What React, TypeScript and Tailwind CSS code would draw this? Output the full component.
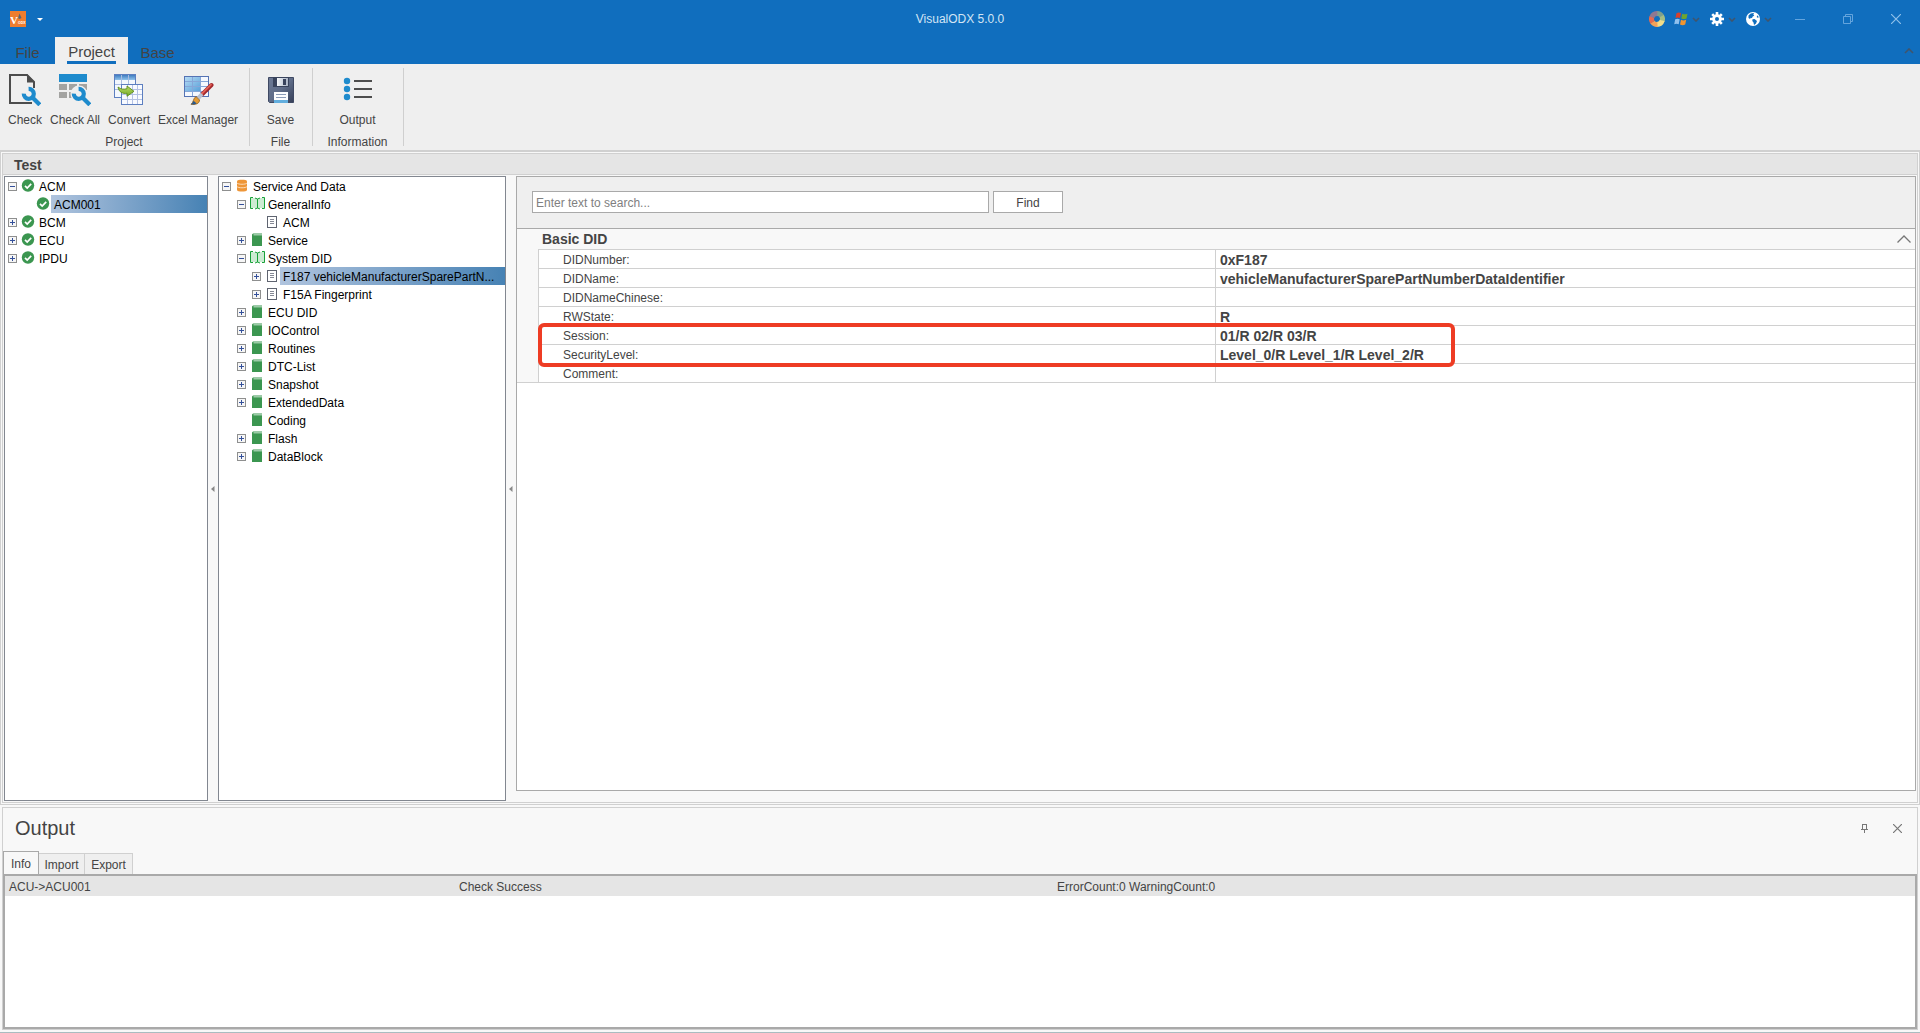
import React from 'react';

type TreeIcon = 'ok' | 'db' | 'open' | 'book' | 'doc';

interface TreeRow {
  label: string;
  level: number;
  icon: TreeIcon;
  expander?: '+' | '-';
  selected?: boolean;
}

const ECU_ROWS: TreeRow[] = [
  { label: 'ACM', level: 0, icon: 'ok', expander: '-' },
  { label: 'ACM001', level: 1, icon: 'ok', selected: true },
  { label: 'BCM', level: 0, icon: 'ok', expander: '+' },
  { label: 'ECU', level: 0, icon: 'ok', expander: '+' },
  { label: 'IPDU', level: 0, icon: 'ok', expander: '+' },
];

const SERVICE_ROWS: TreeRow[] = [
  { label: 'Service And Data', level: 0, icon: 'db', expander: '-' },
  { label: 'GeneralInfo', level: 1, icon: 'open', expander: '-' },
  { label: 'ACM', level: 2, icon: 'doc' },
  { label: 'Service', level: 1, icon: 'book', expander: '+' },
  { label: 'System DID', level: 1, icon: 'open', expander: '-' },
  { label: 'F187 vehicleManufacturerSparePartN...', level: 2, icon: 'doc', expander: '+', selected: true },
  { label: 'F15A Fingerprint', level: 2, icon: 'doc', expander: '+' },
  { label: 'ECU DID', level: 1, icon: 'book', expander: '+' },
  { label: 'IOControl', level: 1, icon: 'book', expander: '+' },
  { label: 'Routines', level: 1, icon: 'book', expander: '+' },
  { label: 'DTC-List', level: 1, icon: 'book', expander: '+' },
  { label: 'Snapshot', level: 1, icon: 'book', expander: '+' },
  { label: 'ExtendedData', level: 1, icon: 'book', expander: '+' },
  { label: 'Coding', level: 1, icon: 'book' },
  { label: 'Flash', level: 1, icon: 'book', expander: '+' },
  { label: 'DataBlock', level: 1, icon: 'book', expander: '+' },
];

const PROPERTIES = [
  { name: 'DIDNumber:', value: '0xF187' },
  { name: 'DIDName:', value: 'vehicleManufacturerSparePartNumberDataIdentifier' },
  { name: 'DIDNameChinese:', value: '' },
  { name: 'RWState:', value: 'R' },
  { name: 'Session:', value: '01/R 02/R 03/R' },
  { name: 'SecurityLevel:', value: 'Level_0/R Level_1/R Level_2/R' },
  { name: 'Comment:', value: '' },
];

const INDENT = ['pl-[3px]', 'pl-[18px]', 'pl-[33px]'];

/* ---------- tree ---------- */

const TreeGlyph = ({ icon }: { icon: TreeIcon }) => {
  switch (icon) {
    case 'ok':
      return (
        <svg width="16" height="16" viewBox="0 0 16 16">
          <circle cx="8" cy="7.5" r="6.2" fill="#3b9650" />
          <path d="M5 7.800l2.200 2.200 4-4.200" fill="none" stroke="#fff" strokeWidth="1.700" />
        </svg>
      );
    case 'db':
      return (
        <svg width="16" height="16" viewBox="0 0 16 16">
          <path d="M3 3.200C3 1.300 13 1.300 13 3.200V12c0 2-10 2-10 0z" fill="#ee9638" />
          <path d="M3 5c1 1.700 9 1.700 10 0M3 8.500c1 1.700 9 1.700 10 0" fill="none" stroke="#fde3c8" strokeWidth="0.9" />
        </svg>
      );
    case 'open':
      return (
        <svg width="16" height="16" viewBox="0 0 16 16">
          <path d="M2 2h5l1.500 1 1-1H15v10H9.500l-1 1-1-1H2z" fill="#ccebd2" />
          <path d="M4 1.500H1.500v11H4M13 1.500h2.500v11H13M6 2l2.500 1L11 2M6 13l2.500-1 2.500 1M8.500 3v9" fill="none" stroke="#17a238" />
        </svg>
      );
    case 'book':
      return (
        <svg width="16" height="16" viewBox="0 0 16 16">
          <path d="M3 2.500L4 1.500h9v1H4.500v.8H13V14H3z" fill="#3b9650" />
        </svg>
      );
    default:
      return (
        <svg width="16" height="16" viewBox="0 0 16 16">
          <rect x="3.500" y="2.500" width="9" height="11" fill="#fff" stroke="#5f6470" />
          <path d="M6 5.500h4M6 7.500h4M6 9.500h4" stroke="#858995" />
        </svg>
      );
  }
};

const Expander = ({ kind }: { kind: '+' | '-' }) => (
  <button type="button" aria-label={kind === '+' ? 'Expand' : 'Collapse'} className="block">
    <svg width="9" height="9" viewBox="0 0 9 9">
      <rect x="0.5" y="0.5" width="8" height="8" fill="#f6f6f6" stroke="#8e8f8f" />
      <path d={kind === '+' ? 'M2 4.5h5M4.5 2v5' : 'M2 4.5h5'} stroke="#34509a" />
    </svg>
  </button>
);

const Tree = ({ rows, label }: { rows: TreeRow[]; label: string }) => (
  <ul role="tree" aria-label={label} className="text-black">
    {rows.map((row, index) => (
      <li
        key={index}
        role="treeitem"
        aria-level={row.level + 1}
        aria-selected={!!row.selected}
        className={`flex h-[18px] items-center ${INDENT[row.level]}`}
      >
        <span className="mr-[3px] w-[9px] shrink-0">{row.expander && <Expander kind={row.expander} />}</span>
        <span className="shrink-0">
          <TreeGlyph icon={row.icon} />
        </span>
        <span
          className={`h-[18px] min-w-0 flex-1 truncate pl-[3px] leading-[20px] ${
            row.selected ? 'bg-linear-to-r from-[#b0c4de] to-[#4682b4]' : ''
          }`}
        >
          {row.label}
        </span>
      </li>
    ))}
  </ul>
);

const Splitter = () => (
  <div className="flex w-[10px] shrink-0 items-center justify-center">
    <svg width="4" height="6" viewBox="0 0 4 6">
      <path d="M3.500 0v6L0 3z" fill="#888" />
    </svg>
  </div>
);

/* ---------- ribbon icons ---------- */

const Wrench = () => (
  <>
    <path d="M19.600 14.800a5 5 0 1 1-4.800 4.800" fill="none" stroke="#1e8bcd" strokeWidth="4.200" />
    <path d="M23 23l7.800 7.800" stroke="#1e8bcd" strokeWidth="4.200" />
  </>
);

const CheckIcon = () => (
  <svg width="32" height="32" viewBox="0 0 32 32">
    <path d="M25 15V8l-7-7H1v28h22" fill="none" stroke="#4d4d4d" strokeWidth="2" />
    <path d="M18 0l8 8.500h-8z" fill="#4d4d4d" />
    <path d="M14 12h14v13H14z" fill="#efefef" />
    <path d="M25 14V8" stroke="#4d4d4d" strokeWidth="2" />
    <Wrench />
  </svg>
);

const CheckAllIcon = () => (
  <svg width="32" height="32" viewBox="0 0 32 32">
    <path d="M0 0h28v8H0z" fill="#1e8bcd" />
    <path d="M0 10h8v6H0zM10 10h8v6h-8zM20 10h8v6h-8zM0 18h8v6H0zM10 18h8v6h-8z" fill="#a3a3a1" />
    <circle cx="20" cy="20" r="8.500" fill="#efefef" />
    <Wrench />
  </svg>
);

const ConvertIcon = () => (
  <svg width="32" height="32" viewBox="0 0 32 32">
    <defs>
      <linearGradient id="convHead" x1="0" y1="0" x2="0" y2="1">
        <stop offset="0" stopColor="#3f7cc0" />
        <stop offset="1" stopColor="#8fc3ec" />
      </linearGradient>
      <linearGradient id="convArrow" x1="0" y1="0" x2="0" y2="1">
        <stop offset="0" stopColor="#b9dc63" />
        <stop offset="1" stopColor="#74a928" />
      </linearGradient>
    </defs>
    <rect x="1.500" y="0.500" width="21" height="23" fill="#f3f7fd" stroke="#5d7fc0" />
    <rect x="2" y="1" width="20" height="5" fill="url(#convHead)" />
    <path d="M2 10.500h20M2 15.500h20M8.500 1v22M15.500 1v22" stroke="#a9bbe0" />
    <rect x="8.500" y="10.500" width="21" height="20" fill="#f8faff" stroke="#5d7fc0" />
    <path d="M9 15.500h20M9 20.500h20M9 25.500h20M14.500 11v19M19.500 11v19M24.500 11v19" stroke="#b3c1e4" />
    <path d="M5 13c3 2.500 6 2.500 9 1.700V12l7 5.300-7 5v-3C10 20 6 18.500 5 13z" fill="url(#convArrow)" stroke="#5b8a1c" strokeWidth="0.9" />
  </svg>
);

const ExcelIcon = () => (
  <svg width="32" height="32" viewBox="0 0 32 32">
    <defs>
      <linearGradient id="xlCells" x1="0" y1="0" x2="1" y2="1">
        <stop offset="0" stopColor="#b5daf4" />
        <stop offset="1" stopColor="#579fd8" />
      </linearGradient>
    </defs>
    <rect x="2.500" y="2.500" width="24" height="20" fill="#f5f8fe" stroke="#5573b4" />
    <rect x="3" y="3" width="16" height="14" fill="url(#xlCells)" />
    <path d="M3 7.500h23M3 12.500h23M3 17.500h23M10.500 3v19M18.500 3v19" stroke="#86a7d8" />
    <path d="M29.500 11L20 20.500" stroke="#a3272b" strokeWidth="4" strokeLinecap="round" />
    <path d="M29 10.700L20 19.700" stroke="#e36055" strokeWidth="1.800" strokeLinecap="round" />
    <path d="M20 20l-4 4.300" stroke="#b9c0cf" strokeWidth="4" />
    <path d="M14 22.500l3.500 3.500c0 4-4.500 4.800-8.500 4.300 2.500-1.500 2-5.800 5-7.800z" fill="#e39b35" stroke="#8a5a1b" strokeWidth="0.800" />
    <path d="M9 30.300c1.500-.8 2-2.300 2.600-3.500l3 2.800c-1.600.8-3.600 1-5.600.7z" fill="#27598f" />
  </svg>
);

const SaveIcon = () => (
  <svg width="32" height="32" viewBox="0 0 32 32">
    <defs>
      <linearGradient id="disk" x1="0" y1="0" x2="1" y2="1">
        <stop offset="0" stopColor="#6d7a96" />
        <stop offset="0.5" stopColor="#5f6c88" />
        <stop offset="1" stopColor="#353e57" />
      </linearGradient>
      <linearGradient id="shutter" x1="0" y1="0" x2="1" y2="0">
        <stop offset="0" stopColor="#f6f8fb" />
        <stop offset="1" stopColor="#aab4c6" />
      </linearGradient>
    </defs>
    <path d="M3.500 3.500h25v25h-24l-1-1z" fill="url(#disk)" stroke="#3f4963" />
    <rect x="8" y="3" width="16" height="10" fill="#39435c" />
    <rect x="12" y="4" width="11" height="8" fill="url(#shutter)" />
    <rect x="18" y="5" width="3" height="6" fill="#39435c" />
    <rect x="9" y="18" width="14" height="11" fill="#fdfdfe" />
    <rect x="9" y="26" width="14" height="3" fill="#62aede" />
    <path d="M11 20.500h10M11 23.500h10" stroke="#8c9cb8" />
  </svg>
);

const OutputIcon = () => (
  <svg width="32" height="32" viewBox="0 0 32 32">
    {[7, 15, 23].map(y => (
      <g key={y}>
        <circle cx="5" cy={y} r="3.200" fill="#1e8bcd" />
        <path d={`M12 ${y}h18`} stroke="#4d4d4d" strokeWidth="2" />
      </g>
    ))}
  </svg>
);

const RibbonButton = ({ label, children }: { label: string; children: React.ReactNode }) => (
  <button type="button" className="flex flex-col items-center gap-[6px] whitespace-nowrap px-1 leading-4">
    {children}
    {label}
  </button>
);

const RibbonGroup = ({ caption, className, children }: { caption: string; className: string; children: React.ReactNode }) => (
  <section aria-label={caption} className={`relative flex h-full flex-col justify-between pt-[10px] pr-0.5 ${className}`}>
    <div className="flex justify-center">{children}</div>
    <div className="text-center leading-4">{caption}</div>
    <span className="absolute top-1 right-0 bottom-1 w-px bg-[#cfcfcf]" />
  </section>
);

/* ---------- title bar ---------- */

const Caret = () => (
  <svg width="8" height="5" viewBox="0 0 8 5">
    <path d="M1 1l3 3 3-3" fill="none" stroke="#41556c" strokeWidth="1.600" />
  </svg>
);

const TitleBar = () => (
  <header className="grid h-[37px] grid-cols-[1fr_auto_1fr] items-center bg-[#106ebe] pt-px text-white">
    <div className="flex items-center gap-[11px] pl-[10px]">
      <svg width="16" height="16" viewBox="0 0 16 16" aria-label="VisualODX">
        <rect width="16" height="16" fill="#ef7d2e" />
        <path d="M8 7l1.500-4.500L11.500 7l-2 1z" fill="#5d6470" />
        <text x="0" y="13" fontFamily="Liberation Serif, serif" fontSize="11" fontWeight="700" fill="#fff">V</text>
        <text x="8" y="13" fontFamily="Liberation Sans, sans-serif" fontSize="3.500" fontWeight="700" fill="#fff">ODX</text>
      </svg>
      <button type="button" aria-label="Customize toolbar">
        <svg width="6" height="3" viewBox="0 0 6 3"><path d="M0 0h6L3 3z" fill="#fff" /></svg>
      </button>
    </div>
    <h1 className="text-[#d3e5f5]">VisualODX 5.0.0</h1>
    <div className="flex items-center justify-end">
      <button type="button" aria-label="Skin color" className="mr-[9px]">
        <svg width="16" height="16" viewBox="0 0 16 16">
          <g fill="none" strokeWidth="5">
            <path d="M8 2.500A5.500 5.500 0 0 1 12.800 5.200" stroke="#7f9f8c" />
            <path d="M12.600 5a5.500 5.500 0 0 1 .5 5" stroke="#a3bd86" />
            <path d="M13.200 9.600A5.500 5.500 0 0 1 8 13.500" stroke="#f0dc8a" />
            <path d="M8.500 13.500A5.500 5.500 0 0 1 3.400 11" stroke="#f2a259" />
            <path d="M3.600 11.300A5.500 5.500 0 0 1 3 5.800" stroke="#e36a50" />
            <path d="M2.900 6.200A5.500 5.500 0 0 1 8.300 2.500" stroke="#8e7891" />
          </g>
        </svg>
      </button>
      <div className="mr-1 flex items-center gap-[10px]">
        <button type="button" aria-label="Skins" className="flex items-center gap-1">
          <svg width="14" height="14" viewBox="0 0 14 14">
            <path d="M2.500 1.200C4 .2 5.500.2 7 1L6 6C4.500 5.200 3 5.200 1.500 6z" fill="#d8402c" />
            <path d="M8.200 1.700c1.700.8 3.300.8 5.300 0l-1 4.800c-1.700.8-3.500.8-5.200 0z" fill="#6fa52d" />
            <path d="M1.200 7.300c1.500-.8 3-.8 4.500 0l-1 5c-1.500-.8-3-.8-4.500 0z" fill="#8fc0ee" />
            <path d="M7 7.800c1.700.8 3.300.8 5.200 0l-1 4.800c-1.700.8-3.500.8-5.200 0z" fill="#f0952f" />
          </svg>
          <Caret />
        </button>
        <button type="button" aria-label="Settings" className="flex items-center gap-1">
          <svg width="14" height="14" viewBox="0 0 14 14">
            <g stroke="#fff" strokeWidth="2.600">
              <path d="M7 0v14M0 7h14M2.200 2.200l9.600 9.600M11.800 2.200l-9.600 9.600" />
            </g>
            <circle cx="7" cy="7" r="4.800" fill="#fff" />
            <circle cx="7" cy="7" r="2" fill="#106ebe" />
          </svg>
          <Caret />
        </button>
        <button type="button" aria-label="Language" className="flex items-center gap-1">
          <svg width="14" height="14" viewBox="0 0 14 14">
            <circle cx="7" cy="7" r="7" fill="#fff" />
            <path d="M2.500 3.500C4 1.500 6 .8 8 1L7.300 2.600 8.300 3.600 6.500 4.800 6 6.200 4.800 5.800 4 7 2.500 6z" fill="#106ebe" />
            <path d="M6.500 7.200l2-.2 2.500 2-1 2.500L8 13 7.500 10.500 6.300 9z" fill="#106ebe" />
            <path d="M11 3.200l1.500 1.300-.2 1.500-1.500-.8z" fill="#106ebe" />
          </svg>
          <Caret />
        </button>
      </div>
      <button type="button" aria-label="Minimize" className="flex w-12 justify-center">
        <svg width="10" height="10" viewBox="0 0 10 10"><path d="M0 5.500h10" stroke="#64a4dd" /></svg>
      </button>
      <button type="button" aria-label="Restore" className="flex w-12 justify-center">
        <svg width="10" height="10" viewBox="0 0 10 10">
          <path d="M.5 2.500h7v7h-7zM2.500 2.500v-2h7v7h-2" fill="none" stroke="#64a4dd" />
        </svg>
      </button>
      <button type="button" aria-label="Close" className="flex w-12 justify-center">
        <svg width="10" height="10" viewBox="0 0 10 10"><path d="M0 0l10 10M10 0L0 10" stroke="#8fc0ea" strokeWidth="1.200" /></svg>
      </button>
    </div>
  </header>
);

const App: React.FC = () => {
  return (
    <div className="flex min-h-screen flex-col border-b border-[#a9bcc0] bg-[#f8f8f8] pb-0.5 font-['Liberation_Sans',Arial,sans-serif] text-[12px] leading-4 text-[#444444]">
      <TitleBar />

      <nav className="flex h-[27px] bg-[#106ebe] text-[15px]">
        <button type="button" className="w-[55px] pt-1">File</button>
        <button type="button" className="flex w-[73px] flex-col items-center justify-between bg-[#efefef] pt-[7px]">
          Project
          <span className="h-[3px] w-[49px] bg-[#106ebe]" />
        </button>
        <button type="button" className="w-[59px] pt-1">Base</button>
        <button type="button" aria-label="Collapse ribbon" className="mr-[6px] ml-auto">
          <svg width="10" height="6" viewBox="0 0 10 6">
            <path d="M1 5l4-4 4 4" fill="none" stroke="#41556c" strokeWidth="1.600" />
          </svg>
        </button>
      </nav>

      <div className="flex h-[86px] bg-[#efefef]">
        <RibbonGroup caption="Project" className="w-[250px]">
          <div className="flex w-full pl-1">
            <RibbonButton label="Check"><CheckIcon /></RibbonButton>
            <RibbonButton label="Check All"><CheckAllIcon /></RibbonButton>
            <RibbonButton label="Convert"><ConvertIcon /></RibbonButton>
            <RibbonButton label="Excel Manager"><ExcelIcon /></RibbonButton>
          </div>
        </RibbonGroup>
        <RibbonGroup caption="File" className="w-[63px]">
          <RibbonButton label="Save"><SaveIcon /></RibbonButton>
        </RibbonGroup>
        <RibbonGroup caption="Information" className="w-[91px]">
          <RibbonButton label="Output"><OutputIcon /></RibbonButton>
        </RibbonGroup>
      </div>

      {/* Workspace */}
      <main className="flex flex-1 flex-col border border-t-2 border-[#d0d0d0] p-px">
        <div className="flex flex-1 flex-col border border-[#d0d0d0]">
          <h2 className="h-[21px] border-b border-[#d0d0d0] bg-[#e5e5e5] pl-[11px] text-[14px] leading-[22px] font-bold">Test</h2>
          <div className="flex flex-1 p-px">
            <div className="w-[204px] shrink-0 border border-[#828790] bg-white">
              <Tree rows={ECU_ROWS} label="ECU" />
            </div>
            <Splitter />
            <div className="w-[288px] shrink-0 border border-[#828790] bg-white">
              <Tree rows={SERVICE_ROWS} label="Services" />
            </div>
            <Splitter />
            <div className="mb-[10px] min-w-0 flex-1 border border-[#a9a9a9] bg-white">
              <form className="flex h-[52px] items-start gap-1 border-b border-[#a9a9a9] bg-[#efefef] pt-[14px] pl-[15px]" onSubmit={e => e.preventDefault()}>
                <input
                  type="text"
                  aria-label="Search"
                  placeholder="Enter text to search..."
                  className="h-[22px] w-[457px] border border-[#a9a9a9] bg-white px-[3px] pt-px placeholder:text-[#808080]"
                />
                <button type="submit" className="h-[22px] w-[70px] border border-[#a9a9a9] bg-white pt-px">Find</button>
              </form>
              <div className="relative bg-[#f8f8f8]">
                <div className="flex h-[20px] items-center justify-between pr-1 pl-[25px]">
                  <h3 className="text-[14px] font-bold">Basic DID</h3>
                  <button type="button" aria-label="Collapse category">
                    <svg width="14" height="8" viewBox="0 0 14 8">
                      <path d="M.5 7.500L7 1l6.500 6.500" fill="none" stroke="#777" strokeWidth="1.300" />
                    </svg>
                  </button>
                </div>
                <div className="border-b border-[#d0d0d0] pl-[21px]">
                  <table className="w-full table-fixed border-separate border-spacing-0 bg-white">
                    <tbody>
                      {PROPERTIES.map(prop => (
                        <tr key={prop.name} className="h-[19px]">
                          <th scope="row" className="w-[677px] border-t border-l border-[#d0d0d0] p-0 pt-px pl-6 text-left font-normal">
                            {prop.name}
                          </th>
                          <td className="border-t border-l border-[#d0d0d0] p-0 pt-px pl-1 text-[14px] leading-4 font-bold">{prop.value}</td>
                        </tr>
                      ))}
                    </tbody>
                  </table>
                </div>
                {/* highlight over Session + SecurityLevel */}
                <div className="pointer-events-none absolute top-[94px] left-[21px] h-[44px] w-[917px] rounded-[6px] border-4 border-[#ee3c24]" />
              </div>
            </div>
          </div>
        </div>
      </main>

      {/* Output panel */}
      <section aria-label="Output" className="mx-0.5 mt-0.5 border border-[#d0d0d0]">
        <div className="flex h-[43px] items-center pr-[15px] pl-3">
          <h2 className="flex-1 pb-1 text-[20px] leading-6">Output</h2>
          <button type="button" aria-label="Pin" className="mr-[24px] pb-0.5">
            <svg width="9" height="9" viewBox="0 0 9 9">
              <path d="M2 .5h5M2.500 1v4M6.500 1v4M1 5.500h7M4.500 6v3" fill="none" stroke="#777" />
            </svg>
          </button>
          <button type="button" aria-label="Close panel" className="pb-0.5">
            <svg width="9" height="9" viewBox="0 0 9 9"><path d="M0 0l9 9M9 0L0 9" stroke="#777" strokeWidth="1.200" /></svg>
          </button>
        </div>
        <div role="tablist" className="flex h-[23px] items-end">
          <button type="button" role="tab" aria-selected="true" className="h-[23px] w-[36px] border border-b-0 border-[#a9a9a9] bg-[#f8f8f8] pt-px">Info</button>
          <button type="button" role="tab" aria-selected="false" className="h-[21px] w-[46px] border-t border-r border-[#d0d0d0] bg-[#efefef] pt-0.5">Import</button>
          <button type="button" role="tab" aria-selected="false" className="h-[21px] w-[48px] border-t border-r border-[#d0d0d0] bg-[#efefef] pt-0.5">Export</button>
        </div>
        <div className="min-h-[155px] border-2 border-[#a9a9a9] bg-white">
          <table className="w-full table-fixed">
            <tbody>
              <tr className="h-[20px] bg-[#e5e5e5]">
                <td className="w-[450px] p-0 pt-0.5 pl-1">ACU-&gt;ACU001</td>
                <td className="w-[598px] p-0 pt-0.5 pl-1">Check Success</td>
                <td className="p-0 pt-0.5 pl-1">ErrorCount:0 WarningCount:0</td>
              </tr>
            </tbody>
          </table>
        </div>
      </section>
    </div>
  );
};

export default App;
